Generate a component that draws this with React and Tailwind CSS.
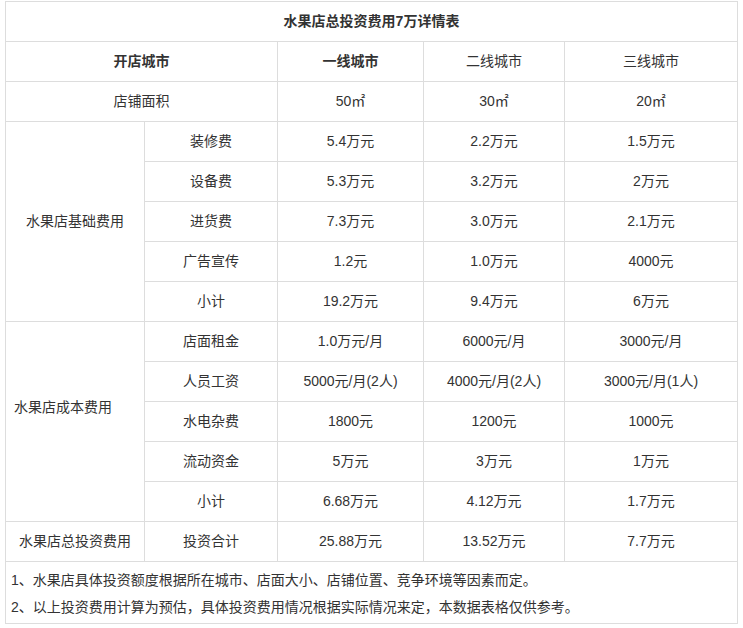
import React from 'react';

const FONT = { fontFamily: '"Liberation Sans", "Noto Sans CJK SC", sans-serif' };

const BASIC = [
  ['装修费', '5.4万元', '2.2万元', '1.5万元'],
  ['设备费', '5.3万元', '3.2万元', '2万元'],
  ['进货费', '7.3万元', '3.0万元', '2.1万元'],
  ['广告宣传', '1.2元', '1.0万元', '4000元'],
  ['小计', '19.2万元', '9.4万元', '6万元'],
];

const COST = [
  ['店面租金', '1.0万元/月', '6000元/月', '3000元/月'],
  ['人员工资', '5000元/月(2人)', '4000元/月(2人)', '3000元/月(1人)'],
  ['水电杂费', '1800元', '1200元', '1000元'],
  ['流动资金', '5万元', '3万元', '1万元'],
  ['小计', '6.68万元', '4.12万元', '1.7万元'],
];

const td = 'border border-[#dddddd] h-[40px] p-0 text-center align-middle';

function Group({ label, rows, labelClass = '' }) {
  return rows.map((r, i) => (
    <tr key={r[0] + i}>
      {i === 0 && (
        <td rowSpan={rows.length} className={`${td} ${labelClass}`}>
          {label}
        </td>
      )}
      {r.map((c, j) => (
        <td key={j} className={td}>{c}</td>
      ))}
    </tr>
  ));
}

export default function App() {
  return (
    <div className="w-[743px] h-[628px] bg-white pt-[1px] pl-[5px]" style={FONT}>
      <table className="border-collapse table-fixed w-[732px] text-[14px] text-[#333333]">
        <colgroup>
          <col className="w-[139px]" />
          <col className="w-[133px]" />
          <col className="w-[146px]" />
          <col className="w-[141px]" />
          <col className="w-[173px]" />
        </colgroup>
        <tbody>
          <tr>
            <td colSpan={5} className={`${td} font-bold`}>水果店总投资费用7万详情表</td>
          </tr>
          <tr>
            <td colSpan={2} className={`${td} font-bold`}>开店城市</td>
            <td className={`${td} font-bold`}>一线城市</td>
            <td className={td}>二线城市</td>
            <td className={td}>三线城市</td>
          </tr>
          <tr>
            <td colSpan={2} className={td}>店铺面积</td>
            <td className={td}>50㎡</td>
            <td className={td}>30㎡</td>
            <td className={td}>20㎡</td>
          </tr>
          <Group label="水果店基础费用" rows={BASIC} />
          <Group label="水果店成本费用" rows={COST} labelClass="!text-left pl-[8px] pb-[28px]" />
          <tr>
            <td className={td}>水果店总投资费用</td>
            <td className={td}>投资合计</td>
            <td className={td}>25.88万元</td>
            <td className={td}>13.52万元</td>
            <td className={td}>7.7万元</td>
          </tr>
          <tr>
            <td colSpan={5} className="border border-[#dddddd] px-[5px] pt-[5px] pb-[2px] text-left leading-[27px]">
              <p>1、水果店具体投资额度根据所在城市、店面大小、店铺位置、竞争环境等因素而定。</p>
              <p>2、以上投资费用计算为预估，具体投资费用情况根据实际情况来定，本数据表格仅供参考。</p>
            </td>
          </tr>
        </tbody>
      </table>
    </div>
  );
}
